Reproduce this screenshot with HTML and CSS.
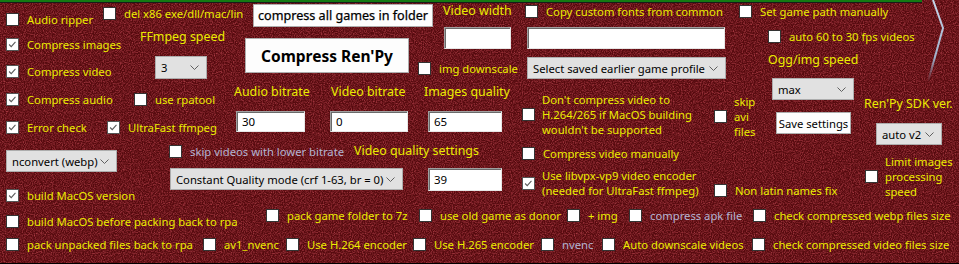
FILE: index.html
```html
<!DOCTYPE html>
<html lang="en">
<head>
    <meta charset="UTF-8">
    <meta name="viewport" content="width=device-width, initial-scale=1.0">
    <title>Ren'Py compressor</title>
    <link rel="stylesheet" href="styles.css">
</head>
<body>
    <div class="form">
        <!-- designer canvas: controls keep their form locations -->
        <div class="canvas">
            <div class="topbar"></div>
            <svg class="edge" width="24" height="90" viewBox="0 0 24 90">
                <defs>
                    <linearGradient id="edgeFade" x1="0" y1="0" x2="0" y2="1">
                        <stop offset="0" stop-color="#c8d6ea"/>
                        <stop offset="0.7" stop-color="#9fb2cc"/>
                        <stop offset="1" stop-color="#9fb2cc" stop-opacity="0"/>
                    </linearGradient>
                </defs>
                <path d="M5 0 L15 28 L0 82" stroke="url(#edgeFade)" stroke-width="2" fill="none"/>
            </svg>

            <!-- left column checkboxes -->
            <label class="cb c-ripper"><span class="box"></span><span>Audio ripper</span></label>
            <label class="cb c-images"><span class="box on"><svg viewBox="0 0 13 13"><path d="M2.5 6.5 L5 9 L10 3.5"/></svg></span><span>Compress images</span></label>
            <label class="cb c-video"><span class="box on"><svg viewBox="0 0 13 13"><path d="M2.5 6.5 L5 9 L10 3.5"/></svg></span><span>Compress video</span></label>
            <label class="cb c-audio"><span class="box on"><svg viewBox="0 0 13 13"><path d="M2.5 6.5 L5 9 L10 3.5"/></svg></span><span>Compress audio</span></label>
            <label class="cb c-errors"><span class="box on"><svg viewBox="0 0 13 13"><path d="M2.5 6.5 L5 9 L10 3.5"/></svg></span><span>Error check</span></label>
            <div class="select s-nconvert"><span>nconvert (webp)</span><svg class="arrow" width="9" height="5"><path d="M0.5 0.5 L4.5 4.5 L8.5 0.5"/></svg></div>
            <label class="cb c-macos"><span class="box on"><svg viewBox="0 0 13 13"><path d="M2.5 6.5 L5 9 L10 3.5"/></svg></span><span>build MacOS version</span></label>

            <!-- ffmpeg options -->
            <label class="cb c-delx86"><span class="box"></span><span>del x86 exe/dll/mac/lin</span></label>
            <div class="cap t-ffmpeg">FFmpeg speed</div>
            <div class="select s-speed"><span>3</span><svg class="arrow" width="9" height="5"><path d="M0.5 0.5 L4.5 4.5 L8.5 0.5"/></svg></div>
            <label class="cb c-rpatool"><span class="box"></span><span>use rpatool</span></label>
            <label class="cb c-ultrafast"><span class="box on"><svg viewBox="0 0 13 13"><path d="M2.5 6.5 L5 9 L10 3.5"/></svg></span><span>UltraFast ffmpeg</span></label>
            <label class="cb c-skiplow"><span class="box"></span><span class="off">skip videos with lower bitrate</span></label>
            <div class="select s-quality"><span>Constant Quality mode (crf 1-63, br = 0)</span><svg class="arrow" width="9" height="5"><path d="M0.5 0.5 L4.5 4.5 L8.5 0.5"/></svg></div>

            <!-- main buttons -->
            <button class="btn b-all">compress all games in folder</button>
            <button class="btn b-main">Compress Ren'Py</button>

            <!-- bitrate fields -->
            <div class="cap t-audio">Audio bitrate</div>
            <div class="field f-audio">30</div>
            <div class="cap t-vbitrate">Video bitrate</div>
            <div class="field f-vbitrate">0</div>
            <div class="cap t-imgq">Images quality</div>
            <div class="field f-imgq">65</div>
            <div class="cap t-vq">Video quality settings</div>
            <div class="field f-vq">39</div>

            <!-- video width / profiles -->
            <div class="cap t-width">Video width</div>
            <div class="field f-width"></div>
            <label class="cb c-downscale"><span class="box"></span><span>img downscale</span></label>
            <label class="cb c-fonts"><span class="box"></span><span>Copy custom fonts from common</span></label>
            <div class="field f-path"></div>
            <div class="select s-profile"><span>Select saved earlier game profile</span><svg class="arrow" width="9" height="5"><path d="M0.5 0.5 L4.5 4.5 L8.5 0.5"/></svg></div>
            <label class="cb multi c-nomac"><span class="box"></span><span>Don't compress video to<br>H.264/265 if MacOS building<br>wouldn't be supported</span></label>
            <label class="cb c-manual"><span class="box"></span><span>Compress video manually</span></label>
            <label class="cb multi c-vp9"><span class="box on"><svg viewBox="0 0 13 13"><path d="M2.5 6.5 L5 9 L10 3.5"/></svg></span><span>Use libvpx-vp9 video encoder<br>(needed for UltraFast ffmpeg)</span></label>
            <label class="cb multi c-skipavi"><span class="box"></span><span>skip<br>avi<br>files</span></label>
            <label class="cb c-nonlatin"><span class="box"></span><span>Non latin names fix</span></label>

            <!-- right side -->
            <label class="cb c-path"><span class="box"></span><span>Set game path manually</span></label>
            <label class="cb c-fps"><span class="box"></span><span>auto 60 to 30 fps videos</span></label>
            <div class="cap t-ogg">Ogg/img speed</div>
            <div class="select s-ogg"><span>max</span><svg class="arrow" width="9" height="5"><path d="M0.5 0.5 L4.5 4.5 L8.5 0.5"/></svg></div>
            <button class="btn b-save">Save settings</button>
            <div class="cap t-sdk">Ren'Py SDK ver.</div>
            <div class="select s-sdk"><span>auto v2</span><svg class="arrow" width="9" height="5"><path d="M0.5 0.5 L4.5 4.5 L8.5 0.5"/></svg></div>
            <label class="cb multi c-limit"><span class="box"></span><span>Limit images<br>processing<br>speed</span></label>
        </div>

        <!-- packing options -->
        <div class="row row-pack">
            <label class="cb w260 drop"><span class="box"></span><span>build MacOS before packing back to rpa</span></label>
            <label class="cb w153"><span class="box"></span><span>pack game folder to 7z</span></label>
            <label class="cb w148"><span class="box"></span><span>use old game as donor</span></label>
            <label class="cb w62"><span class="box"></span><span>+ img</span></label>
            <label class="cb w124"><span class="box"></span><span class="off">compress apk file</span></label>
            <label class="cb"><span class="box"></span><span>check compressed webp files size</span></label>
        </div>

        <!-- encoder options -->
        <div class="row row-enc">
            <label class="cb w197"><span class="box"></span><span>pack unpacked files back to rpa</span></label>
            <label class="cb w83"><span class="box"></span><span>av1_nvenc</span></label>
            <label class="cb w127"><span class="box"></span><span>Use H.264 encoder</span></label>
            <label class="cb w128"><span class="box"></span><span>Use H.265 encoder</span></label>
            <label class="cb w61"><span class="box"></span><span class="off">nvenc</span></label>
            <label class="cb w150"><span class="box"></span><span>Auto downscale videos</span></label>
            <label class="cb"><span class="box"></span><span>check compressed video files size</span></label>
        </div>
    </div>
</body>
</html>
```

FILE: styles.css
```css
body {
    margin: 0;
    background-color: black;
    font-family: "Noto Sans", "Open Sans", sans-serif;
}

.form {
    width: 959px;
    height: 263px;
    overflow: hidden;
    background-color: #560a0e;
    background-image: url("data:image/svg+xml,%3Csvg xmlns='http://www.w3.org/2000/svg' width='180' height='180'%3E%3Cfilter id='n'%3E%3CfeTurbulence type='fractalNoise' baseFrequency='0.9' numOctaves='2' stitchTiles='stitch'/%3E%3CfeColorMatrix values='0 0 0 0 0.5  0 0 0 0 0.06  0 0 0 0 0.08  0 0 0 1.6 -0.6'/%3E%3C/filter%3E%3Crect width='100%25' height='100%25' filter='url(%23n)'/%3E%3C/svg%3E");
    color: #ecec00;
    font-size: 11.25px;
}

.canvas {
    position: relative;
    height: 209px;
}

.topbar {
    position: absolute;
    left: 0;
    top: 0;
    width: 922px;
    height: 2px;
    background-color: #137a13;
    border-bottom: 1px solid #1a1a1a;
}

.edge {
    position: absolute;
    left: 928px;
    top: 0;
}

/* checkboxes */
.cb {
    display: flex;
    align-items: center;
    gap: 8px;
    height: 13px;
    white-space: nowrap;
    line-height: 15px;
}
.canvas .cb {
    position: absolute;
}
.cb.multi {
    height: auto;
    gap: 7px;
}
.box {
    flex: none;
    width: 13px;
    height: 13px;
    box-sizing: border-box;
    border: 1px solid #333;
    background-color: #fff;
}
.box.on {
    border-color: #555;
}
.box svg {
    display: block;
    width: 11px;
    height: 11px;
}
.box path {
    stroke: #5c5c5c;
    stroke-width: 1.3;
    fill: none;
}
.off {
    color: #b4b4d2;
}

.c-ripper { left: 6px; top: 13px; }
.c-images { left: 6px; top: 38px; }
.c-video { left: 6px; top: 65px; }
.c-audio { left: 6px; top: 93px; }
.c-errors { left: 6px; top: 121px; }
.c-macos { left: 6px; top: 189px; }
.c-delx86 { left: 103px; top: 7px; }
.c-rpatool { left: 134px; top: 93px; }
.c-ultrafast { left: 107px; top: 121px; }
.c-skiplow { left: 169px; top: 145px; }
.c-downscale { left: 418px; top: 62px; }
.c-fonts { left: 525px; top: 5px; }
.c-nomac { left: 522px; top: 92px; }
.c-manual { left: 522px; top: 147px; }
.c-vp9 { left: 522px; top: 168px; }
.c-skipavi { left: 714px; top: 94px; }
.c-nonlatin { left: 714px; top: 184px; }
.c-path { left: 739px; top: 5px; }
.c-fps { left: 768px; top: 30px; }
.c-limit { left: 865px; top: 154px; }

/* captions */
.cap {
    position: absolute;
    font-size: 12.4px;
    line-height: 16px;
    white-space: nowrap;
}
.t-width { left: 443px; top: 3px; }
.t-ffmpeg { left: 140px; top: 29px; }
.t-ogg { left: 768px; top: 52px; }
.t-audio { left: 234px; top: 84px; }
.t-vbitrate { left: 331px; top: 84px; }
.t-imgq { left: 424px; top: 84px; }
.t-sdk { left: 864px; top: 96px; }
.t-vq { left: 354px; top: 143px; }

/* text boxes */
.field {
    position: absolute;
    box-sizing: border-box;
    height: 21px;
    padding-left: 5px;
    background-color: #fff;
    border: 1px solid;
    border-color: #a0a0a0 #e6e6e6 #e6e6e6 #a0a0a0;
    box-shadow: inset 1px 1px 0 #6a6a6a;
    color: #000;
    font-size: 11.5px;
    line-height: 19px;
}
.f-width { left: 444px; top: 27px; width: 67px; height: 22px; }
.f-path { left: 527px; top: 27px; width: 198px; height: 22px; }
.f-audio { left: 236px; top: 111px; width: 69px; }
.f-vbitrate { left: 330px; top: 111px; width: 78px; }
.f-imgq { left: 428px; top: 111px; width: 74px; }
.f-vq { left: 428px; top: 168px; width: 74px; height: 23px; line-height: 21px; }

/* combo boxes */
.select {
    position: absolute;
    box-sizing: border-box;
    display: flex;
    align-items: center;
    height: 22px;
    padding: 0 7px 0 5px;
    background-color: #e1e1e1;
    border: 1px solid #adadad;
    color: #000;
    white-space: nowrap;
}
.arrow {
    margin-left: auto;
    flex: none;
}
.arrow path {
    stroke: #606060;
    fill: none;
}
.s-speed { left: 155px; top: 56px; width: 52px; height: 23px; }
.s-nconvert { left: 6px; top: 150px; width: 111px; }
.s-quality { left: 170px; top: 168px; width: 233px; }
.s-profile { left: 527px; top: 57px; width: 199px; }
.s-ogg { left: 772px; top: 78px; width: 82px; }
.s-sdk { left: 876px; top: 123px; width: 66px; }

/* buttons */
.btn {
    position: absolute;
    box-sizing: border-box;
    padding: 0;
    background-color: #fdfdfd;
    border: 1px solid #adadad;
    color: #000;
    font-family: inherit;
    white-space: nowrap;
}
.b-all {
    left: 253px;
    top: 4px;
    width: 180px;
    height: 23px;
    font-size: 12.6px;
    -webkit-text-stroke: 0.25px #000;
}
.b-main {
    left: 245px;
    top: 38px;
    width: 164px;
    height: 35px;
    font-size: 15.5px;
    font-weight: bold;
}
.b-save {
    left: 776px;
    top: 112px;
    width: 75px;
    height: 22px;
    font-size: 11.25px;
}

/* bottom rows */
.row {
    display: flex;
    align-items: flex-start;
    padding-left: 6px;
}
.row-enc {
    margin-top: 10px;
}
.drop { margin-top: 6px; }
.w260 { width: 260px; }
.w153 { width: 153px; }
.w148 { width: 148px; }
.w62 { width: 62px; }
.w124 { width: 124px; }
.w197 { width: 197px; }
.w83 { width: 83px; }
.w127 { width: 127px; }
.w128 { width: 128px; }
.w61 { width: 61px; }
.w150 { width: 150px; }
```
